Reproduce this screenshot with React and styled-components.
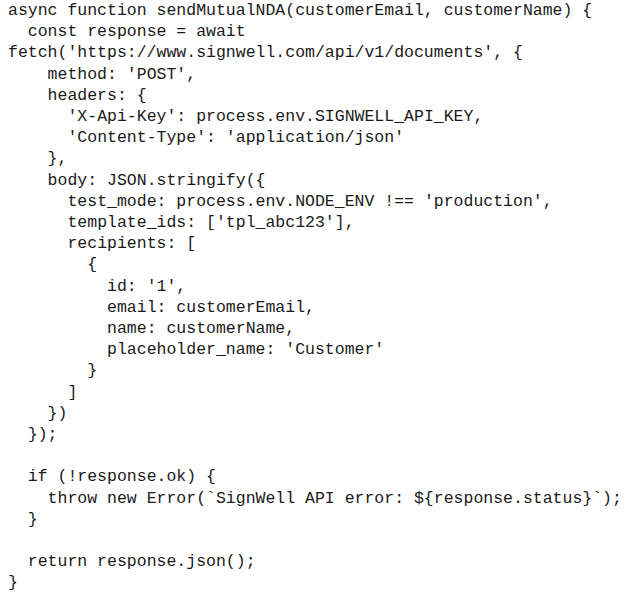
import React from 'react';
import styled, {createGlobalStyle} from 'styled-components';

const code = `async function sendMutualNDA(customerEmail, customerName) {
  const response = await fetch('https://www.signwell.com/api/v1/documents', {
    method: 'POST',
    headers: {
      'X-Api-Key': process.env.SIGNWELL_API_KEY,
      'Content-Type': 'application/json'
    },
    body: JSON.stringify({
      test_mode: process.env.NODE_ENV !== 'production',
      template_ids: ['tpl_abc123'],
      recipients: [
        {
          id: '1',
          email: customerEmail,
          name: customerName,
          placeholder_name: 'Customer'
        }
      ]
    })
  });

  if (!response.ok) {
    throw new Error(\`SignWell API error: \${response.status}\`);
  }

  return response.json();
}`;

const GlobalStyle = createGlobalStyle`
  body {
    margin: 0;
    background: #fff;
  }
`;

const CodeBlock = styled.pre`
  margin: 0;
  padding: 0 8px;
  width: 632px;
  box-sizing: border-box;
  font-family: "Courier New", "Liberation Mono", monospace;
  font-size: 16.5px;
  line-height: 21.2px;
  color: #1a1a1a;
  white-space: pre-wrap;
`;

const App = () => {
  return (
    <>
      <GlobalStyle />
      <CodeBlock>{code}</CodeBlock>
    </>
  );
};

export default App;
